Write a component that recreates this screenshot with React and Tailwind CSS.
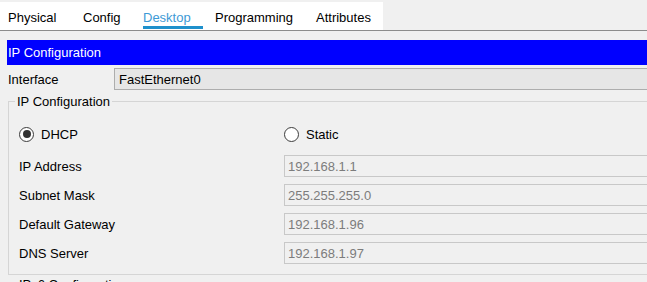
export default function App() {
  const tabs = [
    { name: "Physical", w: "w-[70px]", pl: "pl-[8px]" },
    { name: "Config", w: "w-[61px]", pl: "pl-[13px]" },
    { name: "Desktop", w: "w-[72px]", pl: "pl-[12px]", active: true },
    { name: "Programming", w: "w-[101px]", pl: "pl-[12px]" },
    { name: "Attributes", w: "w-[79px]", pl: "pl-[12px]" },
  ];

  const rows = [
    { label: "IP Address", value: "192.168.1.1" },
    { label: "Subnet Mask", value: "255.255.255.0" },
    { label: "Default Gateway", value: "192.168.1.96" },
    { label: "DNS Server", value: "192.168.1.97" },
  ];

  return (
    <div className="w-[647px] h-[282px] overflow-hidden bg-[#f0f0f0] text-[13px] leading-[15px] text-black font-['Liberation_Sans',Arial,sans-serif]">
      {/* tabs */}
      <div className="h-[31px] pt-[2px] border-b border-[#8c8c8c]">
        <div className="flex h-[28px] w-[383px] bg-white">
          {tabs.map((t) => (
            <div
              key={t.name}
              className={`${t.w} ${t.pl} shrink-0 h-full flex flex-col justify-between`}
            >
              <span className={`pt-[8px] ${t.active ? "text-[#3d9ad6]" : ""}`}>{t.name}</span>
              <div className={`h-[3px] mb-[1px] ${t.active ? "bg-[#1e90cc]" : ""}`} />
            </div>
          ))}
        </div>
      </div>

      {/* header */}
      <div className="mt-[9px] ml-[7px] h-[25px] bg-[#0000ff] text-white flex items-center pl-[1px] w-[700px]">
        IP Configuration
      </div>

      {/* interface */}
      <div className="flex items-center mt-[3px] h-[22px]">
        <span className="w-[114px] shrink-0 pl-[8px]">Interface</span>
        <div className="h-[22px] w-[600px] shrink-0 bg-[#e6e6e6] border border-[#adadad] flex items-center pl-[4px]">
          FastEthernet0
        </div>
      </div>

      {/* fieldset */}
      <fieldset className="mt-[4px] ml-[8px] w-[700px] border border-[#d5d5d5] pl-[10px] pb-[10px]">
        <legend className="ml-[-4px] px-[2px]">IP Configuration</legend>

        <div className="flex items-center h-[18px] mt-[16px]">
          <label className="w-[265px] shrink-0 flex items-center">
            <span className="w-[15px] h-[15px] rounded-full border border-[#3c3c3c] bg-white flex items-center justify-center">
              <span className="w-[8px] h-[8px] rounded-full bg-[#333333]" />
            </span>
            <span className="ml-[7px]">DHCP</span>
          </label>
          <label className="flex items-center">
            <span className="w-[15px] h-[15px] rounded-full border border-[#3c3c3c] bg-white" />
            <span className="ml-[7px]">Static</span>
          </label>
        </div>

        <div className="mt-[12px] flex flex-col gap-[7px]">
          {rows.map((r) => (
            <div key={r.label} className="flex items-center h-[22px]">
              <span className="w-[265px] shrink-0">{r.label}</span>
              <div className="h-[22px] w-[420px] shrink-0 bg-[#f0f0f0] border border-[#c8c8c8] flex items-center pl-[3px] text-[#7c7c7c]">
                {r.value}
              </div>
            </div>
          ))}
        </div>
      </fieldset>

      <div className="ml-[19px] mt-[2px]">IPv6 Configuration</div>
    </div>
  );
}
